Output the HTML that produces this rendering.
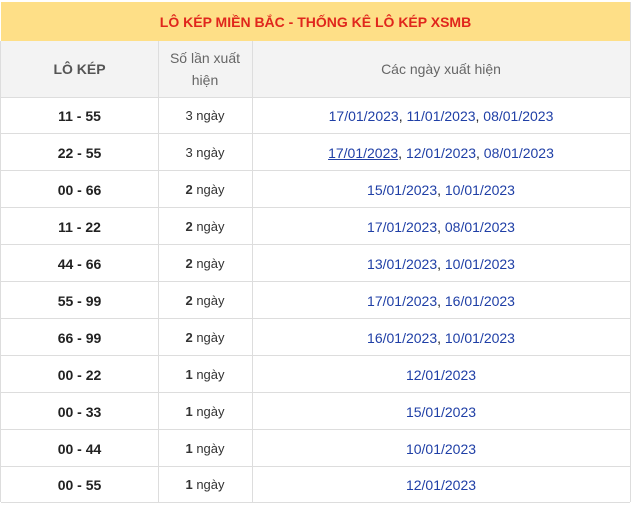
<!DOCTYPE html>
<html><head><meta charset="utf-8"><style>
body{margin:0;background:#fff;font-family:"Liberation Sans",Arial,sans-serif;width:632px;height:505px;overflow:hidden;position:relative}
.t{position:absolute;left:1px;top:2px;width:629px;height:39px;background:#fedf87;color:#e0261c;font-weight:bold;font-size:14px;text-align:center;line-height:40px}
.h{position:absolute;left:1px;top:41px;width:629px;height:56px;background:#f3f3f3;border-bottom:1px solid #ddd}
.c{position:absolute;display:flex;align-items:center;justify-content:center;text-align:center}
.row{position:absolute;left:1px;width:629px;height:36px;border-bottom:1px solid #ddd}
.v{position:absolute;top:41px;width:1px;height:461px;background:#ddd}
.a{font-weight:bold;font-size:14px;color:#222}
.n{font-size:13px;color:#333}
.d{font-size:14px;color:#1f3fa6}
.d i{font-style:normal;color:#222}
</style></head><body>
<div class="t">LÔ KÉP MIỀN BẮC - THỐNG KÊ LÔ KÉP XSMB</div>
<div class="h"></div>
<div class="c" style="left:1px;top:41px;width:157px;height:56px;color:#555;font-weight:bold;font-size:14px">LÔ KÉP</div>
<div class="c" style="left:158px;top:41px;width:94px;height:56px;color:#666;font-size:14px;line-height:22px">Số lần xuất<br>hiện</div>
<div class="c" style="left:252px;top:41px;width:378px;height:56px;color:#666;font-size:14px;padding-bottom:0">Các ngày xuất hiện</div>
<div style="position:absolute;left:0;top:41px;width:1px;height:461px;background:#ddd"></div>
<div style="position:absolute;left:630px;top:2px;width:1px;height:500px;background:#ddd"></div>
<div class="v" style="left:158px"></div>
<div class="v" style="left:252px"></div>
<div id="rows"></div>
<script></script>
<div class="row" style="top:97px"></div><div class="c a" style="left:1px;top:97px;width:157px;height:37px">11 - 55</div><div class="c n" style="left:158px;top:97px;width:94px;height:37px">3 ngày</div><div class="c d" style="left:252px;top:97px;width:378px;height:37px">17/01/2023<i>,</i>&nbsp;11/01/2023<i>,</i>&nbsp;08/01/2023</div>
<div class="row" style="top:134px"></div><div class="c a" style="left:1px;top:134px;width:157px;height:37px">22 - 55</div><div class="c n" style="left:158px;top:134px;width:94px;height:37px">3 ngày</div><div class="c d" style="left:252px;top:134px;width:378px;height:37px"><u>17/01/2023</u><i>,</i>&nbsp;12/01/2023<i>,</i>&nbsp;08/01/2023</div>
<div class="row" style="top:171px"></div><div class="c a" style="left:1px;top:171px;width:157px;height:37px">00 - 66</div><div class="c n" style="left:158px;top:171px;width:94px;height:37px"><b>2</b>&nbsp;ngày</div><div class="c d" style="left:252px;top:171px;width:378px;height:37px">15/01/2023<i>,</i>&nbsp;10/01/2023</div>
<div class="row" style="top:208px"></div><div class="c a" style="left:1px;top:208px;width:157px;height:37px">11 - 22</div><div class="c n" style="left:158px;top:208px;width:94px;height:37px"><b>2</b>&nbsp;ngày</div><div class="c d" style="left:252px;top:208px;width:378px;height:37px">17/01/2023<i>,</i>&nbsp;08/01/2023</div>
<div class="row" style="top:245px"></div><div class="c a" style="left:1px;top:245px;width:157px;height:37px">44 - 66</div><div class="c n" style="left:158px;top:245px;width:94px;height:37px"><b>2</b>&nbsp;ngày</div><div class="c d" style="left:252px;top:245px;width:378px;height:37px">13/01/2023<i>,</i>&nbsp;10/01/2023</div>
<div class="row" style="top:282px"></div><div class="c a" style="left:1px;top:282px;width:157px;height:37px">55 - 99</div><div class="c n" style="left:158px;top:282px;width:94px;height:37px"><b>2</b>&nbsp;ngày</div><div class="c d" style="left:252px;top:282px;width:378px;height:37px">17/01/2023<i>,</i>&nbsp;16/01/2023</div>
<div class="row" style="top:319px"></div><div class="c a" style="left:1px;top:319px;width:157px;height:37px">66 - 99</div><div class="c n" style="left:158px;top:319px;width:94px;height:37px"><b>2</b>&nbsp;ngày</div><div class="c d" style="left:252px;top:319px;width:378px;height:37px">16/01/2023<i>,</i>&nbsp;10/01/2023</div>
<div class="row" style="top:356px"></div><div class="c a" style="left:1px;top:356px;width:157px;height:37px">00 - 22</div><div class="c n" style="left:158px;top:356px;width:94px;height:37px"><b>1</b>&nbsp;ngày</div><div class="c d" style="left:252px;top:356px;width:378px;height:37px">12/01/2023</div>
<div class="row" style="top:393px"></div><div class="c a" style="left:1px;top:393px;width:157px;height:37px">00 - 33</div><div class="c n" style="left:158px;top:393px;width:94px;height:37px"><b>1</b>&nbsp;ngày</div><div class="c d" style="left:252px;top:393px;width:378px;height:37px">15/01/2023</div>
<div class="row" style="top:430px"></div><div class="c a" style="left:1px;top:430px;width:157px;height:37px">00 - 44</div><div class="c n" style="left:158px;top:430px;width:94px;height:37px"><b>1</b>&nbsp;ngày</div><div class="c d" style="left:252px;top:430px;width:378px;height:37px">10/01/2023</div>
<div class="row" style="top:466px"></div><div class="c a" style="left:1px;top:466px;width:157px;height:37px">00 - 55</div><div class="c n" style="left:158px;top:466px;width:94px;height:37px"><b>1</b>&nbsp;ngày</div><div class="c d" style="left:252px;top:466px;width:378px;height:37px">12/01/2023</div>
</body></html>
